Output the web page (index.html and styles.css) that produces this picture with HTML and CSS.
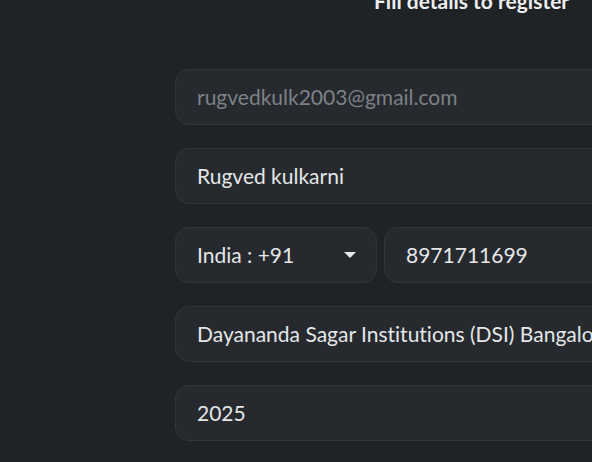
FILE: index.html
```html
<!DOCTYPE html>
<html>
<head>
<meta charset="utf-8">
<link rel="stylesheet" href="styles.css">
</head>
<body>
<div class="page">
  <h2 class="title">Fill details to register</h2>
  <form class="form">
    <div class="field muted">rugvedkulk2003@gmail.com</div>
    <div class="field">Rugved kulkarni</div>
    <div class="row">
      <div class="field select">
        <span>India : +91</span>
        <svg class="caret" width="12" height="6" viewBox="0 0 12 6"><path d="M0 0H12L6 6Z" fill="#e6e6e6"/></svg>
      </div>
      <div class="field grow">8971711699</div>
    </div>
    <div class="field">Dayananda Sagar Institutions (DSI) Bangalore</div>
    <div class="field">2025</div>
  </form>
</div>
</body>
</html>
```
FILE: styles.css
```css
html, body {
  margin: 0;
  padding: 0;
  background: #202326;
  overflow: hidden;
}
.page {
  width: 592px;
  height: 462px;
  font-family: Lato, "Open Sans", sans-serif;
  color: #e4e6e8;
  position: relative;
}
.title {
  margin: 0;
  position: absolute;
  left: 374px;
  top: -12px;
  font-size: 21px;
  line-height: 26px;
  font-weight: 700;
  white-space: nowrap;
  color: #eceef0;
}
.form {
  padding: 69px 0 0 175px;
  width: 600px;
  display: flex;
  flex-direction: column;
  gap: 23px;
}
.field {
  box-sizing: border-box;
  height: 56px;
  border: 1px solid #31363b;
  border-radius: 14px;
  background: #262a2e;
  padding: 0 21px 2px;
  display: flex;
  align-items: center;
  font-size: 21px;
  font-variant-ligatures: none;
  white-space: nowrap;
  overflow: hidden;
}
.muted { color: #7c8187; }
.row {
  display: flex;
  gap: 7px;
}
.select {
  width: 202px;
  flex: none;
  justify-content: space-between;
  padding-right: 20px;
}
.grow { flex: 1; }
.caret { display: block; margin-top: 2px; }
```
